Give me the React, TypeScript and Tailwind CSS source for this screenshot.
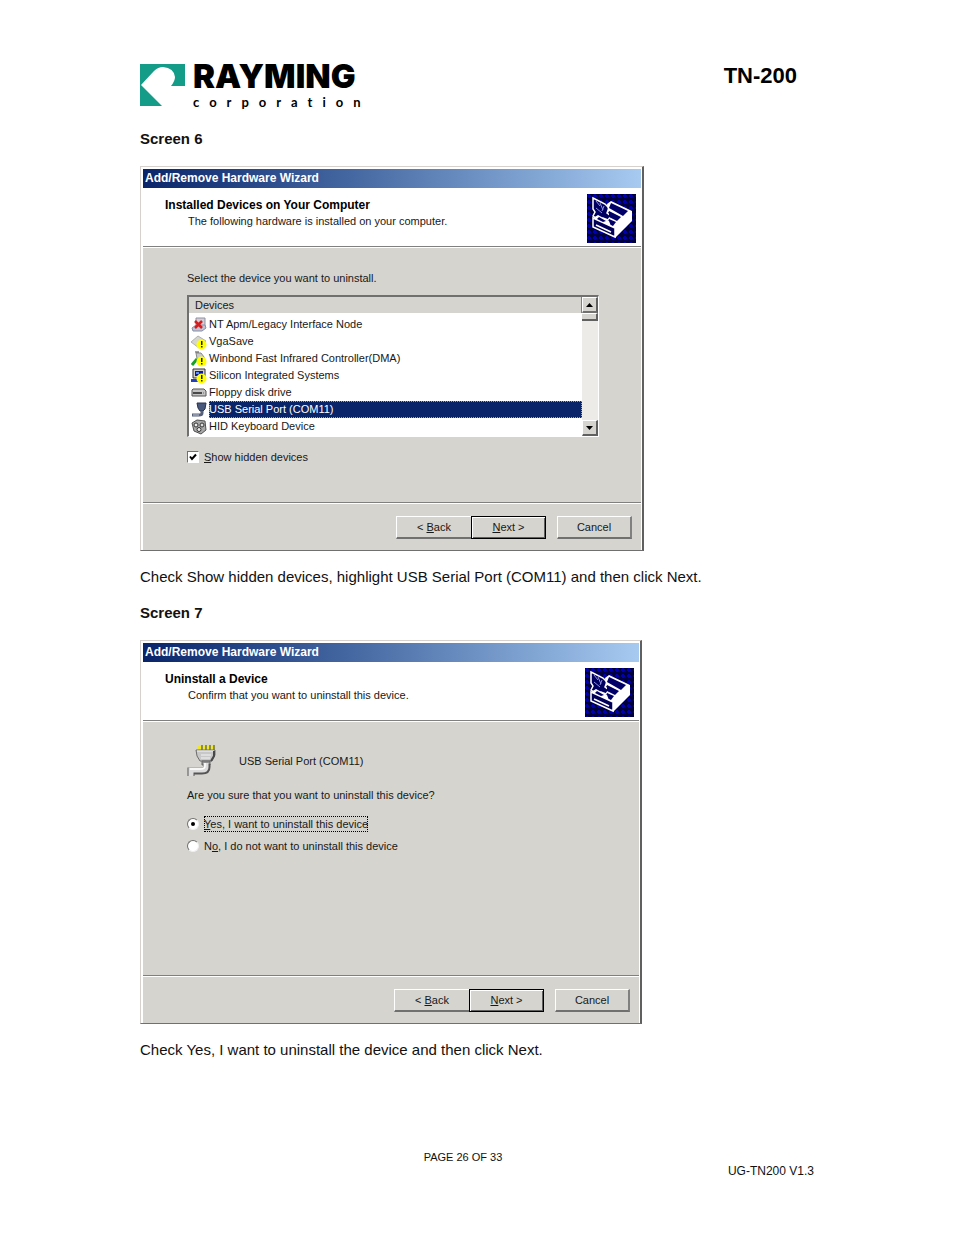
import { useState, type ReactNode } from 'react'

interface WizardProps {
  heading: string
  subheading: string
  className: string
  children: ReactNode
}

const DEVICES = [
  { name: 'NT Apm/Legacy Interface Node', icon: 'node' },
  { name: 'VgaSave', icon: 'vga' },
  { name: 'Winbond Fast Infrared Controller(DMA)', icon: 'infrared' },
  { name: 'Silicon Integrated Systems', icon: 'display' },
  { name: 'Floppy disk drive', icon: 'drive' },
  { name: 'USB Serial Port (COM11)', icon: 'port' },
  { name: 'HID Keyboard Device', icon: 'hid' },
]

function Warning() {
  return (
    <>
      <circle cx="10.500" cy="10.500" r="5" fill="#ffff00" />
      <path d="M10 7h1.500v4H10zM10 12h1.500v1.500H10z" fill="#222200" />
    </>
  )
}

function DeviceIcon({ kind }: { kind: string }) {
  return (
    <svg viewBox="0 0 16 16" className="h-4 w-4 shrink-0" aria-hidden="true">
      {kind === 'node' && (
        <>
          <path d="M5 1h9v8H5z" fill="#d0d0d8" stroke="#9090a0" />
          <path d="M1 11l4-3h9l1 3-4 3H2z" fill="#c0c4d4" stroke="#8890a8" />
          <path d="M4 4l7 7M11 4l-7 7" stroke="#e01818" strokeWidth="2.5" />
        </>
      )}
      {kind === 'vga' && (
        <>
          <path d="M0 8l7-6 8 5-7 7z" fill="#d4d4d0" stroke="#b0b0ac" />
          <Warning />
        </>
      )}
      {kind === 'infrared' && (
        <>
          <path d="M5 2h5l3 4v7H7z" fill="#c8ccc8" stroke="#888" />
          <path d="M4 1h4" stroke="#444" />
          <path d="M1 14l5-6" stroke="#18a028" strokeWidth="3" />
          <Warning />
        </>
      )}
      {kind === 'display' && (
        <>
          <path d="M2 1h12v9H2z" fill="#d4d0c8" stroke="#303038" />
          <path d="M4 3h8v5H4z" fill="#0818a0" />
          <path d="M5 4h3v2H5z" fill="#6090ff" />
          <path d="M0 11h9v3H0z" fill="#2040c0" />
          <Warning />
        </>
      )}
      {kind === 'drive' && (
        <>
          <path d="M2 4h11l2 2v5H1V5z" fill="#c4c4c4" stroke="#555" />
          <path d="M2 8h9" stroke="#222" strokeWidth="1.5" />
          <path d="M12 8h1" stroke="#18a028" />
        </>
      )}
      {kind === 'port' && (
        <>
          <path d="M6 1h9l-1 6-2 2H9L7 6z" fill="#48587c" stroke="#283450" />
          <path d="M11 9v2q0 2-3 2H1" fill="none" stroke="#566078" strokeWidth="3" />
          <path d="M2 13h6" stroke="#c0c8d8" />
        </>
      )}
      {kind === 'hid' && (
        <>
          <path d="M1 4l5-3 8 1 1 9-5 4-7-3z" fill="#a8a8a8" stroke="#505050" />
          <circle cx="5" cy="6" r="2" fill="#eee" stroke="#333" />
          <circle cx="11" cy="6" r="2" fill="#ddd" stroke="#333" />
          <circle cx="8" cy="10.500" r="2" fill="#eee" stroke="#333" />
        </>
      )}
    </svg>
  )
}

function HardwareIcon() {
  const lines = [2, 8, 14, 20, 26, 32, 38, 44]
  return (
    <svg viewBox="0 0 49 49" className="mt-[6px] h-[49px] w-[49px] shrink-0" aria-hidden="true">
      <path d="M0 0h49v49H0z" fill="#00003c" />
      {lines.map((n) => (
        <path key={n} d={`M${n} 0v49M0 ${n}h49`} stroke="#0000b0" strokeWidth="2" strokeDasharray="4 2" />
      ))}
      {/* open flap */}
      <path d="M6 4l12 6 4 4-2 5 4 3-3 4-5-2-4 2-6-4 2-4-2-3z" fill="#000060" stroke="#fff" strokeWidth="1.5" />
      <path d="M9 7l4 5M13 9l3 7M9 14l6 5M17 12l-2 5" stroke="#9090e0" />
      {/* lid and right side */}
      <path d="M20 10l4-3 21 10v10L28 44v-9l-9-4 5-8-3-6z" fill="#fff" />
      <path d="M24 9l17 8-5 5-14-8z" fill="#000068" />
      <path d="M22 17l12 6-4 4-8-4z" fill="#000068" />
      <path d="M22 25l7 3-3 4-6-2z" fill="#000068" />
      {/* front panel */}
      <path d="M6 24l22 10v9L6 33z" fill="#000058" stroke="#fff" strokeWidth="1.500" />
      <path d="M6 24l5-3 11 6 2 5z" fill="#fff" />
      <path d="M12 23l7 4-3 1-6-3z" fill="#000068" />
      <path d="M9 31l15 7" stroke="#fff" strokeWidth="1.5" />
    </svg>
  )
}

function SerialIcon() {
  return (
    <svg viewBox="0 0 32 36" className="h-9 w-8 shrink-0" aria-hidden="true">
      <path d="M11 2h17v5H11z" fill="#8c8c50" />
      <path d="M11 2h3v5h-3zM16 2h2v5h-2zM20 2h2v5h-2zM24 2h2v5h-2z" fill="#f0e828" />
      <path d="M9 7h19v5l-3 6H13l-3-5z" fill="#c8c8c8" stroke="#6c6c6c" />
      <path d="M10 8h17M14 12h10M14 15h9" stroke="#f4f4f4" />
      <path d="M27 8v5l-3 5" fill="none" stroke="#484848" strokeWidth="2" />
      <path d="M15 18h8v4h-8z" fill="#909090" stroke="#666" />
      <path d="M20 21v3q0 4-5 4H4v5" fill="none" stroke="#555" strokeWidth="7" />
      <path d="M19 20v4q0 3-4 3H4v6" fill="none" stroke="#dcdcdc" strokeWidth="5" />
      <path d="M18 20v3q0 3-4 3H3" fill="none" stroke="#fff" strokeWidth="1.5" />
    </svg>
  )
}

function Wizard({ heading, subheading, className, children }: WizardProps) {
  return (
    <section className={`flex w-full flex-col border-t border-r-2 border-b border-l border-t-[#d8d0cc] border-r-[#606060] border-b-[#707070] border-l-[#d8d0cc] bg-white pt-[2px] pr-px pl-[2px] text-[11px] leading-4 text-[#181818] ${className}`}>
      <div className="h-[19px] bg-linear-to-r from-[#0a246a] to-[#a6caf0] pl-[2px] text-[12px] leading-[19px] font-bold whitespace-nowrap text-white">
        Add/Remove Hardware Wizard
      </div>
      <header className="flex h-[59px] justify-between border-b border-[#808080] pr-[5px] pl-[22px]">
        <div className="pt-[9px]">
          <h2 className="text-[12px] leading-4 font-bold text-black">{heading}</h2>
          <p className="pl-[23px]">{subheading}</p>
        </div>
        <HardwareIcon />
      </header>
      <div className="mt-px flex-1 bg-[#d6d4ce] pr-[42px] pl-11">{children}</div>
      <footer className="flex justify-end border-t border-[#808080] bg-[#d6d4ce]">
        <div className="flex flex-1 justify-end gap-[11px] border-t border-white pt-3 pr-[9px] pb-[11px]">
          <div className="flex">
            <button className="h-[23px] w-[75px] border-t border-b-2 border-l border-t-white border-b-[#707070] border-l-white">
              &lt; <u>B</u>ack
            </button>
            <button className="h-[23px] w-[75px] border border-black pb-px shadow-[inset_1px_1px_#fff,inset_-1px_-1px_#606060]">
              <u>N</u>ext &gt;
            </button>
          </div>
          <button className="h-[23px] w-[75px] border-t border-r-2 border-b-2 border-l border-t-white border-r-[#808080] border-b-[#707070] border-l-white">
            Cancel
          </button>
        </div>
      </footer>
    </section>
  )
}

function DeviceList() {
  const [selected, setSelected] = useState('USB Serial Port (COM11)')

  return (
    <div className="mt-[9px] flex h-[142px] overflow-hidden border-t-2 border-r border-b border-l-2 border-t-[#707070] border-r-white border-b-white border-l-[#707070] bg-white">
      <div className="min-w-0 flex-1 overflow-hidden">
        <table className="w-full border-collapse">
          <thead>
            <tr className="h-4 bg-[#d6d4ce]">
              <th className="border-r border-[#808080] p-0 pl-[6px] text-left leading-4 font-normal">Devices</th>
            </tr>
          </thead>
          <tbody>
            <tr aria-hidden="true" className="h-[3px]"><td className="p-0"></td></tr>
            {DEVICES.map((d) => (
              <tr key={d.name} onClick={() => setSelected(d.name)}>
                <td className="p-0">
                  <div className="flex h-[17px] items-center gap-[2px] pl-[2px]">
                    <DeviceIcon kind={d.icon} />
                    <span className={`flex-1 leading-[17px] whitespace-nowrap ${d.name === selected ? 'bg-[#0a246a] text-white outline-1 -outline-offset-1 outline-dotted outline-[#b8a850]' : ''}`}>
                      {d.name}
                    </span>
                  </div>
                </td>
              </tr>
            ))}
          </tbody>
        </table>
      </div>
      <div className="flex w-4 shrink-0 flex-col bg-[#ecebe8]">
        <button aria-label="Scroll up" className="flex h-4 items-center justify-center border-t border-r-2 border-b-2 border-l border-t-white border-r-[#606060] border-b-[#707070] border-l-white bg-[#d6d4ce]">
          <svg viewBox="0 0 7 4" className="h-1 w-[7px]"><path d="M3.500 0L7 4H0z" /></svg>
        </button>
        <div className="h-2 border-t border-r-2 border-b-2 border-t-white border-r-[#606060] border-b-[#606060] bg-[#d6d4ce]" />
        <div className="flex-1" />
        <button aria-label="Scroll down" className="flex h-4 items-center justify-center border-t border-r-2 border-b-2 border-l border-t-white border-r-[#606060] border-b-[#606060] border-l-white bg-[#d6d4ce]">
          <svg viewBox="0 0 7 4" className="h-1 w-[7px]"><path d="M3.500 4L7 0H0z" /></svg>
        </button>
      </div>
    </div>
  )
}

const RADIO_CLASS =
  "flex h-3 w-3 shrink-0 appearance-none items-center justify-center rounded-full border border-t-[#707070] border-r-[#f0f0f0] border-b-[#f0f0f0] border-l-[#707070] bg-white checked:before:h-1 checked:before:w-1 checked:before:rounded-full checked:before:bg-black checked:before:content-['']"

export default function App() {
  const [showHidden, setShowHidden] = useState(true)
  const [answer, setAnswer] = useState('yes')

  return (
    <div className="min-h-screen bg-white px-[140px] pt-16 pb-14 font-['Liberation_Sans',Arial,sans-serif] text-[15px] leading-5 text-[#111]">
      {/* Letterhead */}
      <header className="mb-5 flex h-[45px] items-start justify-between pr-[17px]">
        <div className="flex gap-2">
          <svg viewBox="0 0 45 42" className="h-[42px] w-[45px]" aria-hidden="true">
            <path d="M0 0h45v22H31q4-5 4-9-1-9-12-10-5 0-9 4L1 21l21 21H0z" fill="#149c88" />
          </svg>
          <div className="text-black">
            <div className="font-[Inter,sans-serif] text-[33px] leading-6 font-black">RAYMING</div>
            <div className="mt-[6px] font-[Lato,sans-serif] text-[13px] leading-4 font-bold tracking-[10px]">corporation</div>
          </div>
        </div>
        <div className="text-[22px] leading-6 font-bold text-black">TN-200</div>
      </header>

      <main>
        <h1 className="mb-[17px] font-bold">Screen 6</h1>
        <Wizard
          heading="Installed Devices on Your Computer"
          subheading="The following hardware is installed on your computer."
          className="max-w-[504px]"
        >
          <p className="pt-[22px]">Select the device you want to uninstall.</p>
          <DeviceList />
          <label className="mt-3 mb-[37px] flex w-fit items-center gap-[5px]">
            <span className="relative h-3 w-3">
              <input
                type="checkbox"
                checked={showHidden}
                onChange={(e) => setShowHidden(e.target.checked)}
                className="block h-3 w-3 appearance-none border border-t-[#707070] border-r-white border-b-white border-l-[#707070] bg-white"
              />
              {showHidden && (
                <svg viewBox="0 0 12 12" className="pointer-events-none absolute inset-0">
                  <path d="M3 5.500l2 2.500 4-4.500" fill="none" stroke="#000" strokeWidth="2" />
                </svg>
              )}
            </span>
            <span><u>S</u>how hidden devices</span>
          </label>
        </Wizard>
        <p className="mt-4">
          Check Show hidden devices, highlight USB Serial Port (COM11) and then click Next.
        </p>

        <h1 className="mt-4 mb-[17px] font-bold">Screen 7</h1>
        <Wizard
          heading="Uninstall a Device"
          subheading="Confirm that you want to uninstall this device."
          className="max-w-[502px]"
        >
          <div className="flex items-center gap-5 pt-[21px]">
            <SerialIcon />
            <span>USB Serial Port (COM11)</span>
          </div>
          <p className="mt-2">Are you sure that you want to uninstall this device?</p>
          <div className="mt-[13px] mb-[121px] flex flex-col gap-[6px]">
            <label className="flex w-fit items-center gap-[5px]">
              <input type="radio" name="uninstall" checked={answer === 'yes'} onChange={() => setAnswer('yes')} className={RADIO_CLASS} />
              <span className="outline-1 -outline-offset-1 outline-dotted outline-black"><u>Y</u>es, I want to uninstall this device</span>
            </label>
            <label className="flex w-fit items-center gap-[5px]">
              <input type="radio" name="uninstall" checked={answer === 'no'} onChange={() => setAnswer('no')} className={RADIO_CLASS} />
              <span>N<u>o</u>, I do not want to uninstall this device</span>
            </label>
          </div>
        </Wizard>
        <p className="mt-4">Check Yes, I want to uninstall the device and then click Next.</p>
      </main>

      <footer className="mt-[90px] leading-[14px]">
        <div className="pr-7 text-center text-[11px]">PAGE 26 OF 33</div>
        <div className="text-right text-[12px]">UG-TN200 V1.3</div>
      </footer>
    </div>
  )
}
